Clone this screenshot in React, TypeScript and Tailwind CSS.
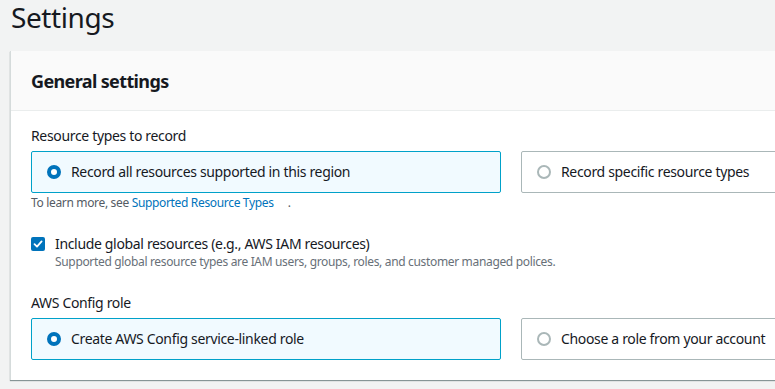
import React from "react";

function Radio({ checked }: { checked: boolean }) {
  return checked ? (
    <span className="block h-[14px] w-[14px] shrink-0 rounded-full border-[4px] border-[#0073bb] bg-white" />
  ) : (
    <span className="block h-[14px] w-[14px] shrink-0 rounded-full border-[2px] border-[#aab7b8] bg-white" />
  );
}

function Tile({ label, checked, width }: { label: string; checked?: boolean; width: string }) {
  return (
    <div
      className={
        checked
          ? `flex h-[42px] shrink-0 items-center gap-[10px] rounded-[2px] border border-[#00a1c9] bg-[#f1faff] pl-[15px] ${width}`
          : `flex h-[42px] shrink-0 items-center gap-[10px] rounded-[2px] border border-[#aab7b8] bg-white pl-[15px] ${width}`
      }
    >
      <Radio checked={!!checked} />
      <span className="text-[14px] leading-[20px] text-[#16191f]">{label}</span>
    </div>
  );
}

export default function App() {
  return (
    <div
      className="h-[389px] w-[775px] overflow-hidden bg-[#f2f3f3] pl-[10px] tracking-[-0.021em] text-[#16191f]"
      style={{ fontFamily: '"Noto Sans", "Open Sans", Arial, sans-serif' }}
    >
      <h1 className="h-[51px] pl-[1px] text-[28px] font-normal leading-[34px] tracking-[-0.015em] text-[#16191f]">
        Settings
      </h1>

      <div className="w-[800px] border-l border-[#d5dbdb] bg-white shadow-[0_1px_1px_0_#879596]">
        <div className="flex h-[60px] items-center border-b border-[#eaeded] bg-[#fafafa] pl-[20px]">
          <h2 className="text-[18px] font-bold leading-[24px] tracking-[-0.035em]">General settings</h2>
        </div>

        <div className="pl-[20px] pt-[15px] pb-[20px]">
          <div className="text-[14px] leading-[20px]">Resource types to record</div>
          <div className="mt-[5px] flex gap-[20px]">
            <Tile label="Record all resources supported in this region" checked width="w-[470px]" />
            <Tile label="Record specific resource types" width="w-[300px]" />
          </div>
          <div className="mt-[2px] text-[12px] leading-[16px] text-[#545b64]">
            To learn more, see{" "}
            <a className="text-[#0073bb]">Supported Resource Types</a>
            <span className="ml-[14px]">.</span>
          </div>

          <div className="mt-[23px] flex gap-[10px]">
            <span className="mt-[3px] flex h-[14px] w-[14px] shrink-0 items-center justify-center rounded-[2px] bg-[#0073bb]">
              <svg width="10" height="10" viewBox="0 0 10 10" fill="none">
                <path d="M1.5 5.2 L4 7.6 L8.6 2.4" stroke="white" strokeWidth="1.8" strokeLinecap="round" strokeLinejoin="round" />
              </svg>
            </span>
            <div>
              <div className="text-[14px] leading-[20px]">Include global resources (e.g., AWS IAM resources)</div>
              <div className="text-[12px] leading-[16px] text-[#687078]">
                Supported global resource types are IAM users, groups, roles, and customer managed polices.
              </div>
            </div>
          </div>

          <div className="mt-[23px] text-[14px] leading-[20px]">AWS Config role</div>
          <div className="mt-[5px] flex gap-[20px]">
            <Tile label="Create AWS Config service-linked role" checked width="w-[470px]" />
            <Tile label="Choose a role from your account" width="w-[300px]" />
          </div>
        </div>
      </div>
    </div>
  );
}
